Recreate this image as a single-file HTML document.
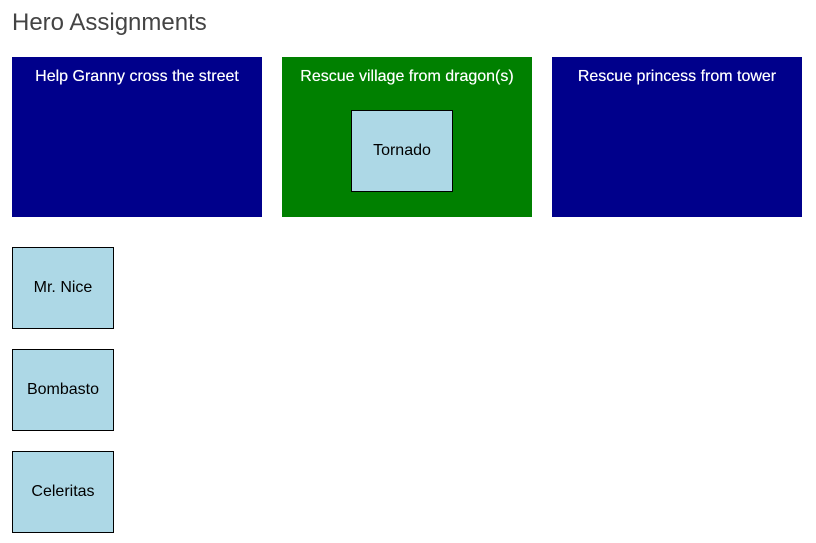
<!DOCTYPE html>
<html><head><style>
body{margin:0;width:816px;height:543px;background:#fff;font-family:"Liberation Sans",Arial,sans-serif;position:relative;overflow:hidden}
h1{position:absolute;left:12px;top:9px;margin:0;font-size:24px;font-weight:normal;color:#444}
.z{position:absolute;top:57px;width:250px;height:160px;color:#fff;font-size:16px;text-align:center;text-shadow:0 0 0.4px #fff}
.z span{display:block;margin-top:11px}
.h{position:absolute;width:100px;height:80px;background:#add8e6;border:1px solid #000;font-size:16px;display:flex;align-items:center;justify-content:center;color:#000;line-height:1}
.h b{font-weight:normal;position:relative;top:0}
</style></head><body>
<h1>Hero Assignments</h1>
<div class="z" style="left:12px;background:#00008b"><span>Help Granny cross the street</span></div>
<div class="z" style="left:282px;background:#008000"><span>Rescue village from dragon(s)</span></div>
<div class="z" style="left:552px;background:#00008b"><span>Rescue princess from tower</span></div>
<div class="h" style="left:351px;top:110px"><b>Tornado</b></div>
<div class="h" style="left:12px;top:247px"><b>Mr. Nice</b></div>
<div class="h" style="left:12px;top:349px"><b>Bombasto</b></div>
<div class="h" style="left:12px;top:451px"><b>Celeritas</b></div>
</body></html>
